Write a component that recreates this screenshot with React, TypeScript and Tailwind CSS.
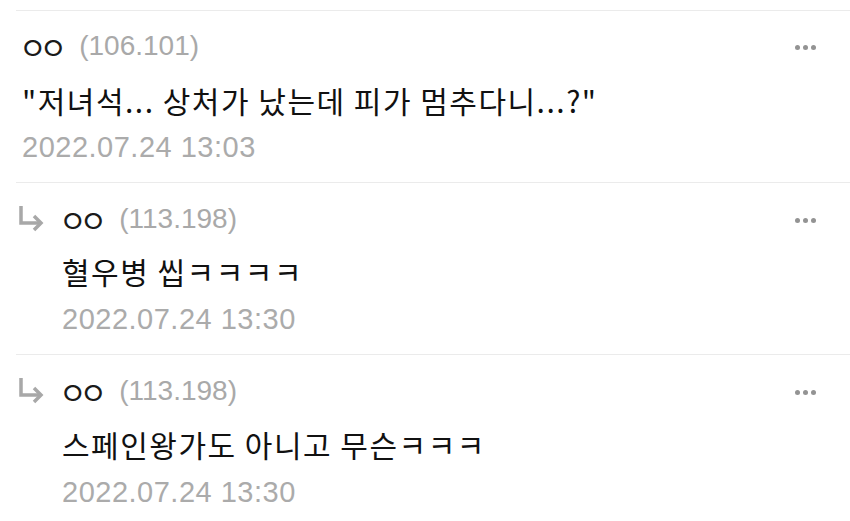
const kr = { fontFamily: '"Noto Sans CJK KR", "Noto Sans", sans-serif' }
const num = { fontFamily: '"Liberation Sans", Arial, sans-serif' }

function MoreDots() {
  return (
    <div className="flex items-center gap-[3px] pt-[2px]">
      <span className="w-[5px] h-[5px] rounded-full bg-[#939393]" />
      <span className="w-[5px] h-[5px] rounded-full bg-[#939393]" />
      <span className="w-[5px] h-[5px] rounded-full bg-[#939393]" />
    </div>
  )
}

function ReplyArrow() {
  return (
    <svg width="28" height="30" viewBox="0 0 28 30" fill="none" stroke="#a8a8a8" strokeWidth="3.5" strokeLinejoin="miter">
      <path d="M4 2v17h20" />
      <path d="M17 12l7 7-7 7" />
    </svg>
  )
}

type Props = {
  ip: string
  text: string
  date: string
  reply?: boolean
  textGap?: string
  dateGap?: string
}

function Comment({ ip, text, date, reply, textGap = "mt-[13px]", dateGap = "mt-[9px]" }: Props) {
  return (
    <div className={`border-t border-[#ebebeb] ${reply ? "pt-[16px]" : "pt-[15px]"} pb-[14px] flex`}>
      {reply && (
        <div className="w-[46px] shrink-0 pl-[1px] pt-[5px]">
          <ReplyArrow />
        </div>
      )}
      <div className={reply ? "flex-1" : "flex-1 pl-[6px]"}>
        <div className="flex items-center h-[40px]">
          <span className="text-[30px] text-[#1a1a1a] tracking-[-7px] mr-[19px] -ml-[3px]" style={kr}>ㅇㅇ</span>
          <span className="text-[28px] text-[#a9a9a9]" style={num}>{ip}</span>
          <div className="ml-auto mr-[34px]">
            <MoreDots />
          </div>
        </div>
        <div className={`${textGap} h-[40px] flex items-center text-[30px] text-[#111] tracking-[1.5px]`} style={kr}>
          {text}
        </div>
        <div className={`${dateGap} h-[40px] flex items-center text-[29px] text-[#ababab] tracking-[0.5px]`} style={num}>
          {date}
        </div>
      </div>
    </div>
  )
}

export default function App() {
  return (
    <div className="w-[850px] h-[521px] bg-white overflow-hidden pt-[10px] pl-[16px]">
      <Comment ip="(106.101)" text={'"저녀석... 상처가 났는데 피가 멈추다니...?"'} date="2022.07.24 13:03" textGap="mt-[14px]" dateGap="mt-[8px]" />
      <Comment reply ip="(113.198)" text="혈우병 씹ㅋㅋㅋㅋ" date="2022.07.24 13:30" textGap="mt-[12px]" />
      <Comment reply ip="(113.198)" text="스페인왕가도 아니고 무슨ㅋㅋㅋ" date="2022.07.24 13:30" />
    </div>
  )
}
